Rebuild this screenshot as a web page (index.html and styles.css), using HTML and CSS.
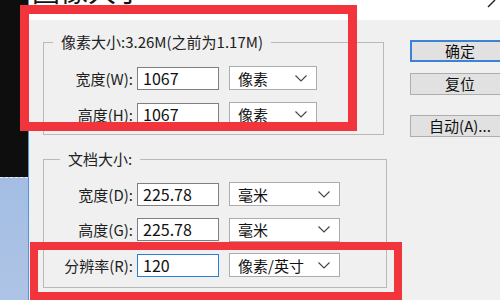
FILE: index.html
```html
<!DOCTYPE html>
<html lang="zh-CN">
<head>
    <meta charset="UTF-8">
    <title>图像大小</title>
    <link rel="stylesheet" href="styles.css">
</head>
<body>
    <div class="screen">
        <div class="canvas">
            <div class="canvas-dark"></div>
            <div class="canvas-photo"></div>
        </div>

        <div class="window">
            <div class="titlebar">
                <span class="title">图像大小</span>
                <svg class="close" width="12" height="8" viewBox="0 0 12 8">
                    <path d="M2 7 L9 0" stroke="#222" stroke-width="1.4"/>
                </svg>
            </div>

            <div class="dialog">
                <div class="groups">
                    <fieldset class="group group-pixels">
                        <legend>像素大小:3.26M(之前为1.17M)</legend>
                        <div class="row">
                            <label>宽度(W):</label>
                            <div class="field">1067</div>
                            <div class="select">像素<svg width="12" height="7" viewBox="0 0 12 7"><path d="M0.5 0.5 L6 6 L11.5 0.5" fill="none" stroke="#444" stroke-width="1.1"/></svg></div>
                        </div>
                        <div class="row">
                            <label>高度(H):</label>
                            <div class="field">1067</div>
                            <div class="select">像素<svg width="12" height="7" viewBox="0 0 12 7"><path d="M0.5 0.5 L6 6 L11.5 0.5" fill="none" stroke="#444" stroke-width="1.1"/></svg></div>
                        </div>
                    </fieldset>

                    <fieldset class="group group-doc">
                        <legend>文档大小:</legend>
                        <div class="row">
                            <label>宽度(D):</label>
                            <div class="field">225.78</div>
                            <div class="select">毫米<svg width="12" height="7" viewBox="0 0 12 7"><path d="M0.5 0.5 L6 6 L11.5 0.5" fill="none" stroke="#444" stroke-width="1.1"/></svg></div>
                        </div>
                        <div class="row">
                            <label>高度(G):</label>
                            <div class="field">225.78</div>
                            <div class="select">毫米<svg width="12" height="7" viewBox="0 0 12 7"><path d="M0.5 0.5 L6 6 L11.5 0.5" fill="none" stroke="#444" stroke-width="1.1"/></svg></div>
                        </div>
                        <div class="row">
                            <label>分辨率(R):</label>
                            <div class="field focused">120</div>
                            <div class="select">像素/英寸<svg width="12" height="7" viewBox="0 0 12 7"><path d="M0.5 0.5 L6 6 L11.5 0.5" fill="none" stroke="#444" stroke-width="1.1"/></svg></div>
                        </div>
                    </fieldset>
                </div>

                <div class="buttons">
                    <button class="btn btn-default">确定</button>
                    <button class="btn">复位</button>
                    <button class="btn btn-auto">自动(A)...</button>
                </div>
            </div>
        </div>
    </div>

    <!-- annotation boxes drawn over the screenshot -->
    <div class="mark mark-pixels"></div>
    <div class="mark mark-res"></div>
</body>
</html>
```

FILE: styles.css
```css
body {
    margin: 0;
    width: 500px;
    height: 300px;
    overflow: hidden;
    position: relative;
    font-family: "Noto Sans CJK SC", "Noto Sans", sans-serif;
    font-size: 15px;
    color: #1e1e1e;
    background-color: #f0f0f0;
}
.screen {
    display: flex;
    height: 300px;
}
.canvas {
    width: 28px;
    flex-shrink: 0;
    display: flex;
    flex-direction: column;
}
.canvas-dark {
    height: 177px;
    background-color: #0e0e0e;
}
.canvas-photo {
    flex: 1;
    background: linear-gradient(180deg, #a3bde3, #aec4e6);
    border-top: 1px dashed #e8eef8;
}
.window {
    flex: 1;
    min-width: 0;
    overflow: hidden;
    border-left: 1px solid #4f95dc;
    background-color: #f0f0f0;
    display: flex;
    flex-direction: column;
}
.titlebar {
    height: 20px;
    flex-shrink: 0;
    background-color: #fff;
    overflow: hidden;
    display: flex;
    justify-content: space-between;
    align-items: flex-start;
}
.title {
    font-size: 28px;
    line-height: 28px;
    margin-top: -24px;
    margin-left: 3px;
    color: #111;
}
.close {
    margin-right: 2px;
}
.dialog {
    display: flex;
    padding-left: 14px;
}
.groups {
    display: flex;
    flex-direction: column;
    flex-shrink: 0;
}
.group {
    margin: 0;
    border: 1px solid #b9b9b9;
    padding: 0;
}
.group legend {
    padding: 0 8px;
    line-height: 20px;
    color: #222;
}
.group-pixels {
    width: 341px;
    box-sizing: border-box;
    margin-top: 12px;
    padding: 14px 0 8px;
}
.group-pixels legend {
    margin-left: 9px;
}
.group-doc {
    width: 344px;
    box-sizing: border-box;
    margin-top: 14px;
    padding: 13px 0 10px;
}
.group-doc legend {
    margin-left: 16px;
}
.row {
    display: flex;
    align-items: center;
    height: 24px;
}
.group-pixels .row + .row {
    margin-top: 12px;
}
.group-doc .row + .row {
    margin-top: 11.5px;
}
label {
    width: 89px;
    flex-shrink: 0;
    text-align: right;
    margin-right: 4px;
}
.field {
    box-sizing: border-box;
    flex-shrink: 0;
    width: 82px;
    height: 23px;
    padding-left: 5px;
    background-color: #fff;
    border: 1px solid #7f7f7f;
    line-height: 21px;
    font-size: 16px;
    color: #111;
}
.field.focused {
    border-color: #2a7fd4;
}
.select {
    box-sizing: border-box;
    flex-shrink: 0;
    height: 24px;
    margin-left: 10px;
    padding: 0 9px 0 8px;
    background-color: #fff;
    border: 1px solid #acacac;
    display: flex;
    align-items: center;
    justify-content: space-between;
    color: #111;
}
.group-pixels .select { width: 88px; }
.group-doc .select { width: 111px; }

.buttons {
    display: flex;
    flex-direction: column;
    flex-shrink: 0;
    margin-left: 23px;
    padding-top: 20px;
}
.btn {
    width: 100px;
    height: 22px;
    padding: 0;
    font-family: inherit;
    font-size: 15px;
    line-height: 18px;
    color: #111;
    background-color: #e1e1e1;
    border: 1px solid #adadad;
    margin-bottom: 11px;
}
.btn-default {
    border: 2px solid #3b83d6;
}
.btn-auto {
    margin-top: 9px;
}

.mark {
    position: absolute;
    box-sizing: border-box;
    border: 9px solid #f2353d;
}
.mark-pixels {
    left: 20px;
    top: 5px;
    width: 337px;
    height: 126px;
}
.mark-res {
    left: 30px;
    top: 242px;
    width: 372px;
    height: 58px;
    border-width: 8px;
}
```
